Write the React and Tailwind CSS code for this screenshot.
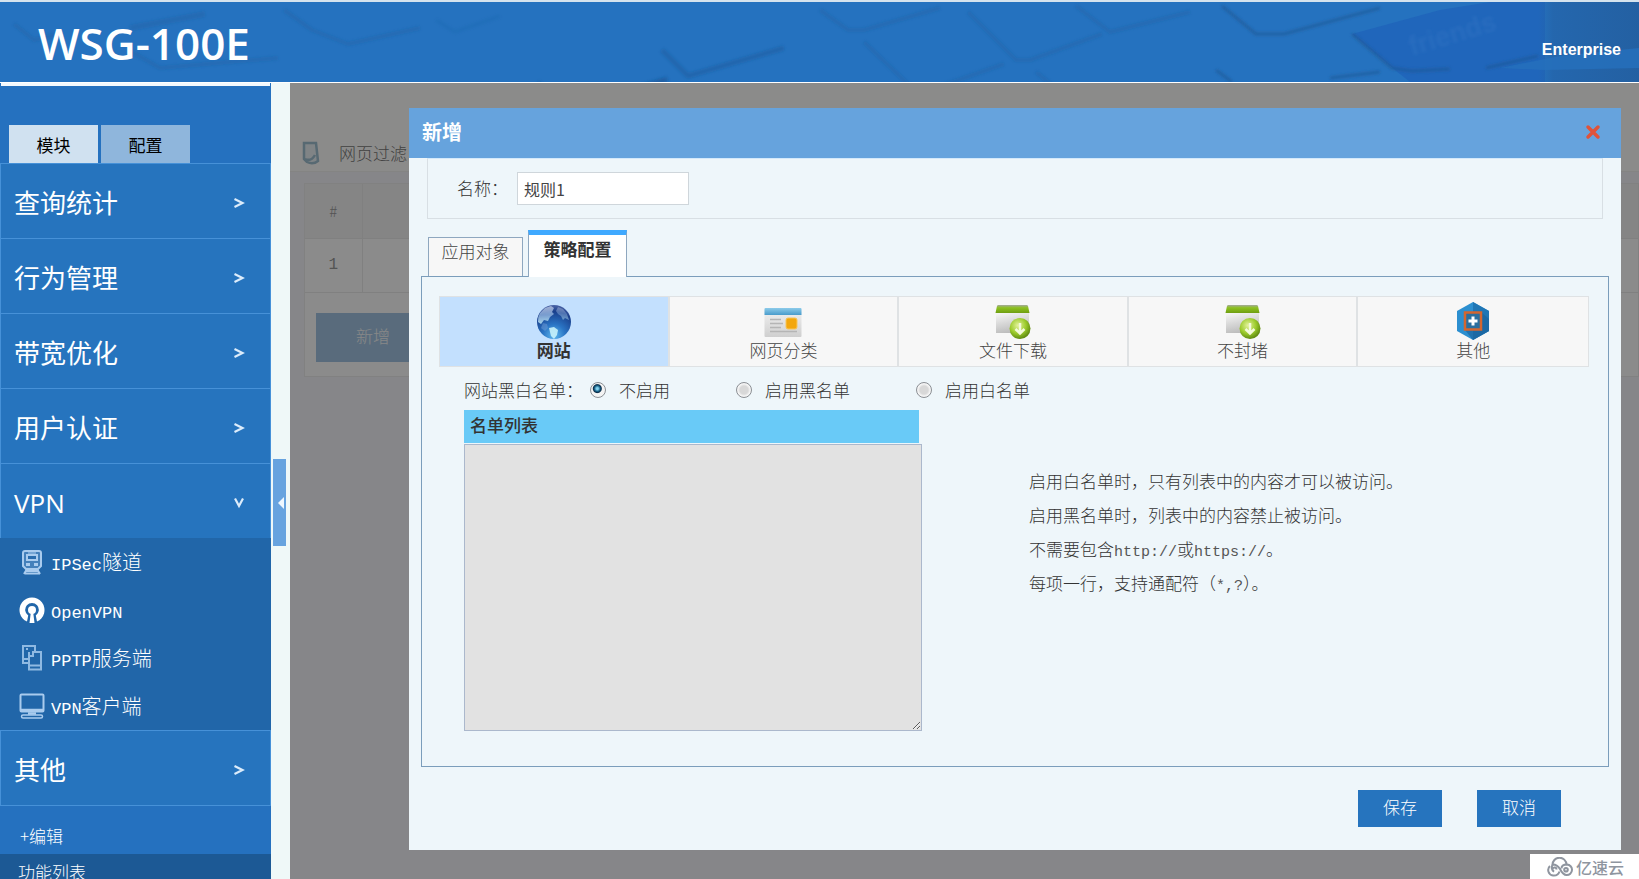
import { useState } from "react";

const cx = (...c) => c.filter(Boolean).join(" ");

function HeaderKeys() {
  return (
    <svg
      className="absolute inset-0 h-full w-full"
      viewBox="0 0 1639 80"
      preserveAspectRatio="none"
      aria-hidden="true"
    >
      <defs>
        <filter id="soft" x="-5%" y="-20%" width="110%" height="140%">
          <feGaussianBlur stdDeviation="1.8" />
        </filter>
        <linearGradient id="edge" x1="0" x2="1">
          <stop offset="0" stopColor="#2463a8" stopOpacity="0" />
          <stop offset="0.15" stopColor="#2463a8" stopOpacity="0.9" />
          <stop offset="1" stopColor="#235d9d" />
        </linearGradient>
      </defs>
      <path d="M1352 32 L1440 8 L1490 0 H1545 V80 H1410 L1395 68 Z" fill="#2066bb" />
      <rect x="1538" y="0" width="101" height="80" fill="url(#edge)" opacity="0.85" />
      <path d="M1500 66 L1560 54 L1639 46 V66 L1545 68 Z" fill="#2570bd" opacity="0.8" />
      <g fill="none" stroke="#1d5594" strokeOpacity="0.26" strokeWidth="4" strokeLinejoin="round" filter="url(#soft)">
        <path d="M14 22 L34 38 L60 32" />
        <path d="M130 26 L205 12" strokeWidth="6" />
        <path d="M132 50 L160 66 L278 56" />
        <path d="M284 8 L312 28 L348 42 L420 26" />
        <path d="M436 18 L455 30 L500 14" strokeOpacity="0.12" />
        <path d="M538 80 L554 100 L600 96 L668 76" transform="translate(0 0)" />
        <path d="M538 80 L553 101 L600 99 L668 78" transform="translate(0 0)" />
        <path d="M820 8 L848 28 L864 28 L940 6" />
        <path d="M864 40 L912 86 L930 88 L1004 62" />
        <path d="M968 10 L1016 58 L1030 58 L1102 32" />
        <path d="M1036 70 L1092 116" />
        <path d="M1076 4 L1110 30 L1190 10" />
        <path d="M820 110 L840 122 L930 108 L968 106" />
      </g>
      <g fill="none" stroke="#1d5594" strokeOpacity="0.4" strokeWidth="5" strokeLinejoin="round" filter="url(#soft)">
        <path d="M538 82 L553 101 L600 97 L666 78" transform="translate(0 0)" />
        <path d="M662 48 L688 74 L784 46" />
      </g>
      <g fill="none" stroke="#1c5591" strokeOpacity="0.6" strokeWidth="3" strokeLinejoin="round" filter="url(#soft)">
        <path d="M1222 4 L1256 32 L1284 32 L1380 6" />
        <path d="M1352 32 L1392 66 L1412 69 L1450 67 M1486 66 L1538 54" />
        <path d="M1216 68 L1232 80 M1330 76 L1380 70" />
      </g>
      <text
        x="1412"
        y="54"
        transform="rotate(-17 1412 54)"
        fontFamily="Liberation Sans, sans-serif"
        fontWeight="700"
        fontSize="27"
        fill="#3a7cc6"
        fillOpacity="0.3"
        filter="url(#soft)"
      >
        friends
      </text>
    </svg>
  );
}

function Globe() {
  return (
    <svg width="36" height="36" viewBox="0 0 36 36" aria-hidden="true">
      <defs>
        <radialGradient id="ocean" cx="0.5" cy="0.9" r="0.95">
          <stop offset="0" stopColor="#5fb8ee" />
          <stop offset="0.35" stopColor="#2a74c4" />
          <stop offset="0.75" stopColor="#1a3f8c" />
          <stop offset="1" stopColor="#5a6fae" />
        </radialGradient>
        <linearGradient id="land" x1="0" x2="0" y1="0" y2="1">
          <stop offset="0" stopColor="#b9c3e0" />
          <stop offset="0.5" stopColor="#8fb2de" />
          <stop offset="1" stopColor="#c8f2fb" />
        </linearGradient>
        <filter id="haze">
          <feGaussianBlur stdDeviation="0.7" />
        </filter>
      </defs>
      <circle cx="18" cy="18" r="17" fill="url(#ocean)" />
      <g filter="url(#haze)">
        <path d="M4 9 L9 4 L15 2 L18 4 L16 8 L18 10 L14 13 L12 17 L8 16 L5 20 L2 18 Q1.500 13 4 9Z" fill="url(#land)" opacity="0.8" />
        <path d="M13 24 L18 23 L22 26 L21 31 L18 35 L15 32 Z" fill="#c8f2fb" opacity="0.9" />
        <path d="M22 3 L27 5 L31 10 L33 16 L29 14 L27 16 L25 12 L22 10 L20 7 Z" fill="url(#land)" opacity="0.45" />
        <path d="M7 19 L11 20 L12 24 L9 27 L5 24Z" fill="#7fa7dd" opacity="0.4" />
      </g>
    </svg>
  );
}

function PageCard() {
  return (
    <svg width="38" height="36" viewBox="0 0 38 36" aria-hidden="true">
      <defs>
        <linearGradient id="cardBg" x1="0" x2="0" y1="0" y2="1">
          <stop offset="0" stopColor="#f2f2f2" />
          <stop offset="1" stopColor="#cfcfcf" />
        </linearGradient>
        <linearGradient id="cardTop" x1="0" x2="0" y1="0" y2="1">
          <stop offset="0" stopColor="#8ccbea" />
          <stop offset="1" stopColor="#4a9ccb" />
        </linearGradient>
      </defs>
      <rect x="0.500" y="5" width="37" height="28" rx="1" fill="url(#cardBg)" />
      <path d="M0.500 11 V5 Q0.500 4 1.500 4 H36.500 Q37.500 4 37.500 5 V11 Z" fill="url(#cardTop)" />
      <path d="M6 15.500 H17 M6 19.500 H19 M6 23.500 H17 M6 27.500 H33" stroke="#b5b5b5" strokeWidth="1.500" />
      <rect x="22" y="14" width="11" height="11" rx="2" fill="#f3a70d" stroke="#f8c65a" />
    </svg>
  );
}

function BoxDownload({ id }) {
  return (
    <svg width="36" height="36" viewBox="0 0 36 36" aria-hidden="true">
      <defs>
        <linearGradient id={id + "b"} x1="0" x2="0.3" y1="0" y2="1">
          <stop offset="0" stopColor="#fafafa" />
          <stop offset="1" stopColor="#bdbdbd" />
        </linearGradient>
        <linearGradient id={id + "t"} x1="0" x2="0" y1="0" y2="1">
          <stop offset="0" stopColor="#a5a99d" />
          <stop offset="0.35" stopColor="#8dc21f" />
          <stop offset="1" stopColor="#6f9e12" />
        </linearGradient>
        <radialGradient id={id + "c"} cx="0.4" cy="0.35" r="0.7">
          <stop offset="0" stopColor="#e3f29a" />
          <stop offset="0.55" stopColor="#9ccb2c" />
          <stop offset="1" stopColor="#557f0c" />
        </radialGradient>
      </defs>
      <rect x="1" y="8" width="33" height="21" fill={"url(#" + id + "b)"} />
      <path d="M0.500 9 L2 2 Q2.200 1 3.500 1 H31.500 Q32.800 1 33 2 L34.500 9 Z" fill={"url(#" + id + "t)"} />
      <circle cx="25" cy="24.500" r="10.500" fill={"url(#" + id + "c)"} />
      <path d="M25 19 V28 M20.500 25 L25 29.500 L29.500 25" fill="none" stroke="#f4fadc" strokeWidth="2.500" />
    </svg>
  );
}

function Hexagon() {
  return (
    <svg width="34" height="38" viewBox="0 0 34 38" aria-hidden="true">
      <path d="M17 0 L33 9 V29 L17 38 L1 29 V9 Z" fill="#2c8fd0" />
      <path d="M17 0 L33 9 V29 L17 38 Z" fill="#1f76b5" />
      <path d="M25 10 L33 17 V29 L17 38 L9 28 Z" fill="#1b639b" opacity="0.65" />
      <rect x="9" y="10.500" width="16" height="17" fill="#2b6f9f" stroke="#d4662f" strokeWidth="2.500" />
      <path d="M17 14.500 V23.500 M12.500 19 H21.500" stroke="#fff" strokeWidth="3" />
    </svg>
  );
}

function TrainIcon() {
  return (
    <svg width="26" height="26" viewBox="0 0 26 26" fill="none" stroke="#a9cbee" strokeWidth="2" aria-hidden="true">
      <path d="M6 2 H20 Q22 2 22 4 V17 L19 20 H7 L4 17 V4 Q4 2 6 2 Z" fill="#6f9fd0" fillOpacity="0.45" />
      <rect x="8" y="6" width="10" height="5" fill="#2a6cad" />
      <path d="M9 4 H17" strokeWidth="1" />
      <path d="M7 15.500 H11 M15 15.500 H19" strokeWidth="3" />
      <path d="M8 20 L5 25 M18 20 L21 25 M7 22 H19 M5 24.500 H21" />
    </svg>
  );
}

function OpenVpnIcon() {
  return (
    <svg width="26" height="26" viewBox="0 0 26 26" aria-hidden="true">
      <path
        d="M8 24.500 A12.500 12.500 0 1 1 18 24.500 L16.800 18.500 A6.800 6.800 0 1 0 9.200 18.500 Z"
        fill="#fff"
      />
      <circle cx="13" cy="13" r="4" fill="#fff" />
      <path d="M12 14 H14 L15.500 26 H10.500 Z" fill="#fff" />
    </svg>
  );
}

function ServersIcon() {
  return (
    <svg width="26" height="26" viewBox="0 0 26 26" fill="none" stroke="#8fb9e2" strokeWidth="2" aria-hidden="true">
      <path d="M9 18 H4 V1 H16 V6" />
      <path d="M4 14 H9 M7 4 H9" />
      <path d="M14 7 H22 V24.500 H10 V11 H14 Z" />
      <path d="M10 20.500 H22 M10 7 V11 H14" />
    </svg>
  );
}

function MonitorIcon() {
  return (
    <svg width="26" height="26" viewBox="0 0 26 26" fill="none" stroke="#a9cbee" strokeWidth="2" aria-hidden="true">
      <rect x="1.500" y="1.500" width="23" height="17" rx="1" />
      <path d="M2 17 H24 M9 20.500 H17" strokeWidth="2.500" />
      <rect x="2.500" y="22" width="21" height="3" rx="1.500" strokeWidth="1.500" />
    </svg>
  );
}

function Chevron({ open }) {
  return (
    <svg width="12" height="12" viewBox="0 0 12 12" fill="none" stroke="#dcecfb" strokeWidth="2.200" aria-hidden="true">
      {open ? <path d="M2 1.500 L6 9 L10 1.500" /> : <path d="M1.500 2 L9.500 6 L1.500 10" />}
    </svg>
  );
}

function NavItem({ label, open }) {
  return (
    <button
      type="button"
      aria-expanded={!!open}
      className="flex h-[75px] w-full items-center justify-between border-x border-t border-[#4691d8] bg-[#2674be] pt-1 pr-[25px] pl-[13px] text-left font-['Open_Sans','Noto_Sans_CJK_SC',sans-serif] text-[26px] leading-8 text-white"
    >
      <span>{label}</span>
      <Chevron open={open} />
    </button>
  );
}

const subItems = [
  { latin: "IPSec", rest: "隧道", Icon: TrainIcon },
  { latin: "OpenVPN", rest: "", Icon: OpenVpnIcon },
  { latin: "PPTP", rest: "服务端", Icon: ServersIcon },
  { latin: "VPN", rest: "客户端", Icon: MonitorIcon },
];

function Sidebar() {
  return (
    <aside className="w-[271px] shrink-0 bg-[#2571bf]">
      <div className="mx-px h-[3px] bg-[#f4f9fd]" />
      <div className="flex gap-[3px] pt-[39px] pl-[9px] text-[17px] text-black">
        <button type="button" className="h-[38px] w-[89px] bg-[#d0e1f0] pt-0.5">模块</button>
        <button type="button" className="h-[38px] w-[89px] bg-[#8fb6dc] pt-0.5">配置</button>
      </div>
      <nav className="bg-[#2166a9]">
        <NavItem label="查询统计" />
        <NavItem label="行为管理" />
        <NavItem label="带宽优化" />
        <NavItem label="用户认证" />
        <NavItem label="VPN" open />
        <ul>
          {subItems.map(({ latin, rest, Icon }) => (
            <li key={latin}>
              <a href="#" className="flex h-12 items-center gap-[6px] pl-[19px] text-[20px] leading-6 font-light text-white">
                <Icon />
                <span>
                  <span className="font-['Liberation_Mono',monospace] text-[17px] leading-none">{latin}</span>
                  {rest}
                </span>
              </a>
            </li>
          ))}
        </ul>
        <NavItem label="其他" />
      </nav>
      <div className="border-t border-[#4691d8] pt-[18px] pb-[6px] pl-5 text-[17px] leading-6 font-light text-white">
        <a href="#">+编辑</a>
      </div>
      <div className="bg-[#1c5995] pt-[6px] pl-[18px] text-[17px] leading-6 font-light text-white">
        功能列表
      </div>
    </aside>
  );
}

function RulesPage() {
  return (
    <section className="bg-[#fefdfb] pt-[46px]">
      <div className="flex h-[43px] items-center gap-[18px] border-b border-[#f0f0ee] pt-1.5 pl-[11px] text-[17px] font-light text-[#777]">
        <svg width="20" height="24" viewBox="0 0 20 24" fill="none" stroke="#9fbfd0" strokeWidth="2.500" aria-hidden="true">
          <path d="M3 2 H15 L17 20 Q12 24 6 21 L3 18 Z" fill="#e9f1f5" />
          <path d="M4 18 Q10 21 14 14" />
        </svg>
        <h1>网页过滤</h1>
      </div>
      <div className="bg-[#f4f5f9] pt-[11px] pl-[14px]">
        <div className="border border-[#ececec] bg-[#fdfdfd] pb-[14px]">
          <table className="w-full table-fixed border-collapse text-[#999]">
            <thead>
              <tr className="h-[54px] bg-[#f2f2f2]">
                <th className="w-[57px] border-r border-b border-[#e9e9e9] text-[15px] font-light">#</th>
                <th className="border-b border-[#e9e9e9]" />
              </tr>
            </thead>
            <tbody>
              <tr className="h-[54px]">
                <td className="border-r border-b border-[#e9e9e9] text-center font-['Liberation_Mono',monospace] text-[16px]">1</td>
                <td className="border-b border-[#e9e9e9]" />
              </tr>
            </tbody>
          </table>
          <button type="button" className="mt-5 ml-[11px] h-[49px] w-[114px] bg-[#a2c4e2] pb-0.5 text-[17px] font-light text-[#f8f8f8]">
            新增
          </button>
        </div>
      </div>
    </section>
  );
}

const categories = [
  { label: "网站", icon: <Globe /> },
  { label: "网页分类", icon: <PageCard /> },
  { label: "文件下载", icon: <BoxDownload id="dl" /> },
  { label: "不封堵", icon: <BoxDownload id="nb" /> },
  { label: "其他", icon: <Hexagon /> },
];

function Choice({ label, value, mode, setMode, className }) {
  return (
    <label className={cx("flex items-center gap-[13px]", className)}>
      <input
        type="radio"
        name="mode"
        value={value}
        checked={mode === value}
        onChange={() => setMode(value)}
        className="size-4 appearance-none rounded-full border border-[#8b8f94] bg-[radial-gradient(circle,#d8d8d8_0_4px,#f4f4f4_6px)] checked:bg-[radial-gradient(circle_at_45%_40%,#7fd0ee_0_1px,#12587f_3px,#0c2f4a_4px,#f4f4f4_5px)]"
      />
      {label}
    </label>
  );
}

function Mono({ children }) {
  return (
    <span className="font-['Liberation_Mono',monospace] text-[15px] leading-none text-[#555]">{children}</span>
  );
}

function RuleDialog() {
  const [name, setName] = useState("规则1");
  const [cat, setCat] = useState(0);
  const [mode, setMode] = useState("off");
  return (
    <div
      role="dialog"
      aria-labelledby="dialog-title"
      className="absolute top-[25px] right-[18px] left-[119px] bg-[#eef6fa] text-[17px] leading-6 font-light text-[#333]"
    >
      <header className="flex h-[50px] items-center justify-between bg-[#66a3dd] pr-[19px] pb-0.5 pl-[13px]">
        <h2 id="dialog-title" className="text-[20px] font-bold text-white">新增</h2>
        <button type="button" aria-label="关闭" className="p-px">
          <svg width="16" height="16" viewBox="0 0 16 16" stroke="#e0533a" strokeWidth="3.500" strokeLinecap="round" aria-hidden="true">
            <path d="M3 3 L13 13 M13 3 L3 13" />
          </svg>
        </button>
      </header>

      <div className="mx-[18px] flex h-[61px] items-center border border-t-[#d3e9fb] border-[#d8dfe4] pl-[29px]">
        <label htmlFor="rule-name" className="w-[60px] pb-0.5">名称：</label>
        <input
          id="rule-name"
          value={name}
          onChange={(e) => setName(e.target.value)}
          className="h-[33px] w-[172px] border border-[#cfd6db] bg-white px-[6px] text-[16px] font-normal text-[#444]"
        />
      </div>

      <div role="tablist" className="mx-3 mt-[11px] flex items-end gap-[5px] pl-[7px]">
        <button
          type="button"
          role="tab"
          className="h-[39px] w-[95px] border border-b-0 border-[#8ea7bf] bg-[#f7f7f7] pb-3 text-[17px] font-light text-[#444]"
        >
          应用对象
        </button>
        <button
          type="button"
          role="tab"
          aria-selected="true"
          className="relative -mb-px h-[47px] w-[99px] border-x border-t-[5px] border-x-[#8ea7bf] border-t-[#3fa9ff] bg-white pb-[14px] text-[17px] font-bold text-[#333]"
        >
          策略配置
        </button>
      </div>

      <div className="mx-3 border border-[#7b9dbb] pt-[19px] pr-[19px] pb-[35px] pl-[17px]">
        <div className="grid grid-cols-5 border border-[#dfe2e4]">
          {categories.map((c, i) => (
            <button
              type="button"
              key={c.label}
              onClick={() => setCat(i)}
              className={cx(
                "flex h-[69px] flex-col items-center border-[#dfe2e4] pt-[5px]",
                i < 4 && "border-r-2",
                i === cat ? "bg-[#c3e0fe] font-bold" : "bg-[#f7f7f7] font-light text-[#444]"
              )}
            >
              <span className="flex h-[38px] items-end">{c.icon}</span>
              <span className="leading-5">{c.label}</span>
            </button>
          ))}
        </div>

        <div className="flex flex-col pl-[25px]">
          <div className="flex h-[43px] items-center pt-[3px]">
            <span className="w-[126px]">网站黑白名单：</span>
            <Choice label="不启用" value="off" mode={mode} setMode={setMode} className="w-[146px]" />
            <Choice label="启用黑名单" value="black" mode={mode} setMode={setMode} className="w-[180px]" />
            <Choice label="启用白名单" value="white" mode={mode} setMode={setMode} />
          </div>
          <div className="flex gap-[107px]">
            <div className="w-[458px] shrink-0">
              <label htmlFor="list" className="mr-[3px] mb-px block h-[33px] bg-[#69caf7] px-[6px] pt-[3px] font-medium">
                名单列表
              </label>
              <textarea
                id="list"
                className="block h-[287px] w-full border border-[#abb8cc] bg-[#e2e2e2] p-1"
              />
            </div>
            <div className="pt-[54px] leading-[34px]">
              <p>启用白名单时，只有列表中的内容才可以被访问。</p>
              <p>启用黑名单时，列表中的内容禁止被访问。</p>
              <p>
                不需要包含<Mono>http://</Mono>或<Mono>https://</Mono>。
              </p>
              <p>
                每项一行，支持通配符（<Mono>*,?</Mono>）。
              </p>
            </div>
          </div>
        </div>
      </div>

      <footer className="flex justify-end gap-[35px] pt-[23px] pr-[60px] pb-[23px] text-white">
        <button type="button" className="h-[37px] w-[84px] bg-[#2674be] pb-1">保存</button>
        <button type="button" className="h-[37px] w-[84px] bg-[#2674be] pb-1">取消</button>
      </footer>
    </div>
  );
}

export default function App() {
  return (
    <div className="flex h-screen flex-col overflow-hidden bg-[#eff8f8] font-['Noto_Sans_CJK_SC',sans-serif]">
      <header className="relative flex h-[83px] shrink-0 items-center justify-between border-t-2 border-b border-t-[#d5e3ee] border-b-white bg-[#2572bf] pr-[18px] pl-[38px]">
        <HeaderKeys />
        <div className="relative pt-0.5 font-['Open_Sans',sans-serif] text-[44px] leading-none font-semibold text-white">
          WSG-100E
        </div>
        <div className="relative pt-4 font-['Liberation_Sans',sans-serif] text-[16px] leading-5 font-bold text-white">
          Enterprise
        </div>
      </header>

      <div className="flex min-h-0 flex-1">
        <Sidebar />
        <div className="w-[19px] shrink-0 pt-[376px] pl-[2px]">
          <button type="button" aria-label="收起" className="flex h-[87px] w-[13px] items-center justify-end bg-[#67a3df] pr-px">
            <svg width="8" height="12" viewBox="0 0 8 12" aria-hidden="true">
              <path d="M7 0 V12 L1 6 Z" fill="#eef7ff" />
            </svg>
          </button>
        </div>
        <main className="relative min-w-0 flex-1 bg-[#f4f5f9]">
          <RulesPage />
          <div className="absolute inset-0 bg-black/45" />
          <RuleDialog />
          <div className="absolute right-0 bottom-0 flex h-[25px] w-[109px] items-center gap-[3px] bg-white pl-[17px] text-[16px] leading-6 font-medium text-[#8f959f]">
            <svg width="26" height="20" viewBox="0 0 26 20" fill="none" stroke="#8f959f" strokeWidth="2" aria-hidden="true">
              <path d="M5.500 8 A7 7 0 0 1 19.500 7.500" />
              <path d="M9.500 12.500 A2 2 0 1 0 7 14.500 A4.500 4.500 0 0 1 6 7.500 Q10 7.500 13 12 Q16 18 19.500 18 A5.200 5.200 0 0 0 20 7.500 Q14.500 7.500 14.500 11.500" />
              <path d="M6 18.500 A5.500 5.500 0 0 1 3 9 M6 18.500 Q11 19 12.500 14.500" />
              <circle cx="19" cy="12.800" r="1.800" />
            </svg>
            <span>亿速云</span>
          </div>
        </main>
      </div>
    </div>
  );
}
